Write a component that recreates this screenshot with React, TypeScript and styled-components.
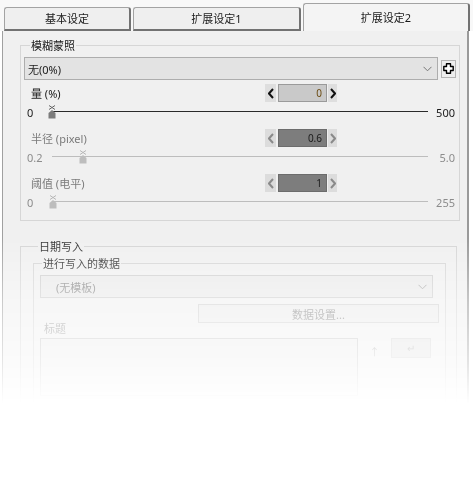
import React from "react";
import styled, { createGlobalStyle } from "styled-components";

const Global = createGlobalStyle`
  html, body { margin: 0; padding: 0; background: #ffffff; }
  body {
    font-family: "Noto Sans", "Noto Sans CJK SC", sans-serif;
    font-size: 11px;
    color: #1a1a1a;
  }
  * { box-sizing: border-box; }
`;

const Root = styled.div`
  width: 473px;
  height: 479px;
  overflow: hidden;
  background: #ffffff;
  -webkit-mask-image: linear-gradient(to bottom, #000 0, #000 238px, rgba(0,0,0,0.55) 302px, rgba(0,0,0,0.27) 362px, transparent 404px);
  mask-image: linear-gradient(to bottom, #000 0, #000 238px, rgba(0,0,0,0.55) 302px, rgba(0,0,0,0.27) 362px, transparent 404px);
`;

const TabBar = styled.div`
  display: flex;
  align-items: flex-end;
  height: 31px;
  padding-left: 4px;
  gap: 2px;
  background: #f8f8f8;
`;

const Tab = styled.div<{ $active?: boolean; $w: number }>`
  width: ${(p) => p.$w}px;
  height: ${(p) => (p.$active ? 28 : 24)}px;
  display: flex;
  align-items: center;
  justify-content: center;
  background: ${(p) => (p.$active ? "#f4f4f4" : "#efefef")};
  border: 1px solid #a3a3a3;
  border-right: 2px solid #727272;
  border-bottom: ${(p) => (p.$active ? "none" : "2px solid #727272")};
  border-radius: 3px 3px 0 0;
  color: #1a1a1a;
  font-size: 11px;
  line-height: 12px;
  padding-top: ${(p) => (p.$active ? 0 : 1)}px;
`;

const Panel = styled.div`
  margin-left: 2px;
  width: 467px;
  height: 448px;
  background: #f0f0f0;
  border-left: 1px solid #a0a0a0;
  border-right: 2px solid #9a9a9a;
  padding: 8px 0 0 17px;
`;

const Group = styled.fieldset<{ $w: number; $pad: string }>`
  margin: 0;
  width: ${(p) => p.$w}px;
  border: 1px solid #d6d6d6;
  padding: ${(p) => p.$pad};
  min-width: 0;
`;

const Legend = styled.legend<{ $ml: number; $c?: string }>`
  margin-left: ${(p) => p.$ml}px;
  padding: 0 1px;
  font-size: 11px;
  line-height: 13px;
  color: ${(p) => p.$c || "#1a1a1a"};
`;

const ComboRow = styled.div`
  display: flex;
  align-items: center;
  gap: 3px;
  margin-top: 5px;
`;

const Combo = styled.div<{ $w: number; $disabled?: boolean }>`
  width: ${(p) => p.$w}px;
  height: 23px;
  display: flex;
  align-items: center;
  justify-content: space-between;
  padding: 0 5px 0 3px;
  background: ${(p) => (p.$disabled ? "#eaeaea" : "#e3e3e3")};
  border: 1px solid ${(p) => (p.$disabled ? "#cfcfcf" : "#adadad")};
  color: ${(p) => (p.$disabled ? "#8a8a8a" : "#1a1a1a")};
  font-size: 11px;
`;

const ComboText = styled.span<{ $pl?: number }>`
  padding-left: ${(p) => p.$pl || 0}px;
`;

const IconBtn = styled.div`
  width: 15px;
  height: 18px;
  display: flex;
  align-items: center;
  justify-content: center;
  background: #eeeeee;
  border: 1px solid #b4b4b4;
`;

const Param = styled.div`
  display: flex;
  flex-direction: column;
  margin-top: 4px;
  & + & { margin-top: 7px; }
`;

const LabelRow = styled.div`
  display: flex;
  align-items: center;
  height: 18px;
`;

const ParamLabel = styled.div<{ $disabled?: boolean }>`
  width: 241px;
  padding-left: 7px;
  color: ${(p) => (p.$disabled ? "#7a7a7a" : "#1a1a1a")};
  font-size: 11px;
`;

const Spinner = styled.div`
  display: flex;
  align-items: center;
  height: 18px;
`;

const SpinArrow = styled.div<{ $w: number; $disabled?: boolean }>`
  width: ${(p) => p.$w}px;
  height: 18px;
  display: flex;
  align-items: center;
  justify-content: center;
  background: ${(p) => (p.$disabled ? "#dcdcdc" : "#dedede")};
`;

const SpinInput = styled.div<{ $disabled?: boolean }>`
  width: 49px;
  height: 18px;
  margin: 0 1px 0 2px;
  display: flex;
  align-items: center;
  justify-content: flex-end;
  padding-right: 4px;
  background: ${(p) => (p.$disabled ? "#7d7d7d" : "#c9c9c9")};
  border: 1px solid ${(p) => (p.$disabled ? "#6c6c6c" : "#9a9a9a")};
  color: ${(p) => (p.$disabled ? "#1a1a1a" : "#6a4a10")};
  font-size: 10px;
`;

const SliderRow = styled.div`
  display: flex;
  align-items: center;
  height: 20px;
`;

const MinLabel = styled.div<{ $disabled?: boolean }>`
  width: 28px;
  padding-left: 3px;
  font-size: 11px;
  color: ${(p) => (p.$disabled ? "#8c8c8c" : "#1a1a1a")};
`;

const MaxLabel = styled.div<{ $disabled?: boolean }>`
  width: 27px;
  text-align: right;
  font-size: 11px;
  color: ${(p) => (p.$disabled ? "#8c8c8c" : "#1a1a1a")};
`;

const Track = styled.div<{ $disabled?: boolean }>`
  position: relative;
  width: 376px;
  height: 20px;
  &::before {
    content: "";
    position: absolute;
    left: 0;
    right: 0;
    top: 9px;
    height: 1px;
    background: ${(p) => (p.$disabled ? "#bdbdbd" : "#2a2a2a")};
  }
`;

const Thumb = styled.svg`
  position: absolute;
  top: 3px;
  transform: translateX(-50%);
`;

const SubGroupWrap = styled.div`
  margin-top: 19px;
`;

const WideBtn = styled.div`
  width: 241px;
  height: 19px;
  margin: 5px 0 0 158px;
  display: flex;
  align-items: center;
  justify-content: center;
  background: #ebebeb;
  border: 1px solid #d0d0d0;
  color: #8a8a8a;
  font-size: 11px;
`;

const SmallLabel = styled.div`
  padding-left: 4px;
  height: 14px;
  line-height: 12px;
  color: #9a9a9a;
  font-size: 11px;
`;

const BottomRow = styled.div`
  display: flex;
  align-items: flex-start;
  margin-top: 1px;
`;

const TextArea = styled.div`
  width: 318px;
  height: 58px;
  background: #ececec;
  border: 1px solid #c4c4c4;
`;

const SideIcon = styled.div`
  width: 33px;
  display: flex;
  justify-content: center;
  padding-top: 6px;
  color: #b0b0b0;
  font-size: 10px;
`;

const SideBtn = styled.div`
  width: 40px;
  height: 20px;
  background: #e2e2e2;
  border: 1px solid #d2d2d2;
  display: flex;
  align-items: center;
  justify-content: center;
  color: #aaa;
  font-size: 10px;
`;

const Chevron = ({ color = "#777" }: { color?: string }) => (
  <svg width="9" height="6" viewBox="0 0 9 6">
    <polyline points="0.5,0.8 4.5,4.8 8.5,0.8" fill="none" stroke={color} strokeWidth="1" />
  </svg>
);

const Arrow = ({ dir, color }: { dir: "l" | "r"; color: string }) => (
  <svg width="6" height="11" viewBox="0 0 6 11">
    <polyline
      points={dir === "l" ? "5,1 1,5.5 5,10" : "1,1 5,5.5 1,10"}
      fill="none"
      stroke={color}
      strokeWidth="2"
    />
  </svg>
);

const ThumbIcon = ({ frac, disabled }: { frac: number; disabled?: boolean }) => (
  <Thumb width="9" height="14" viewBox="0 0 9 14" style={{ left: `${frac * 100}%` }}>
    <line x1="1.5" y1="0.5" x2="7.5" y2="4.5" stroke={disabled ? "#b8b8b8" : "#666"} strokeWidth="1" />
    <line x1="7.5" y1="0.5" x2="1.5" y2="4.5" stroke={disabled ? "#b8b8b8" : "#666"} strokeWidth="1" />
    <polygon points="4.5,5 8,8 8,13.5 1,13.5 1,8" fill={disabled ? "#bdbdbd" : "#7c7c7c"} />
  </Thumb>
);

const PlusIcon = () => (
  <svg width="11" height="11" viewBox="0 0 11 11">
    <polygon
      points="3.5,0.8 7.5,0.8 7.5,3.5 10.2,3.5 10.2,7.5 7.5,7.5 7.5,10.2 3.5,10.2 3.5,7.5 0.8,7.5 0.8,3.5 3.5,3.5"
      fill="#fff"
      stroke="#000"
      strokeWidth="1.4"
      strokeLinejoin="round"
    />
  </svg>
);

type P = { label: string; value: string; min: string; max: string; frac: number; disabled?: boolean };

const params: P[] = [
  { label: "量 (%)", value: "0", min: "0", max: "500", frac: 0 },
  { label: "半径 (pixel)", value: "0.6", min: "0.2", max: "5.0", frac: 0.4 / 4.8, disabled: true },
  { label: "阈值 (电平)", value: "1", min: "0", max: "255", frac: 1 / 255, disabled: true },
];

export default function App() {
  return (
    <Root>
      <Global />
      <TabBar>
        <Tab $w={127}>基本设定</Tab>
        <Tab $w={168}>扩展设定1</Tab>
        <Tab $w={167} $active>扩展设定2</Tab>
      </TabBar>
      <Panel>
        <Group $w={440} $pad="0 3px 8px 3px">
          <Legend $ml={6}>模糊蒙照</Legend>
          <ComboRow>
            <Combo $w={414}>
              <ComboText>无(0%)</ComboText>
              <Chevron />
            </Combo>
            <IconBtn>
              <PlusIcon />
            </IconBtn>
          </ComboRow>
          {params.map((p) => (
            <Param key={p.label}>
              <LabelRow>
                <ParamLabel $disabled={p.disabled}>{p.label}</ParamLabel>
                <Spinner>
                  <SpinArrow $w={11} $disabled={p.disabled}>
                    <Arrow dir="l" color={p.disabled ? "#8a8a8a" : "#111"} />
                  </SpinArrow>
                  <SpinInput $disabled={p.disabled}>{p.value}</SpinInput>
                  <SpinArrow $w={9} $disabled={p.disabled}>
                    <Arrow dir="r" color={p.disabled ? "#8a8a8a" : "#111"} />
                  </SpinArrow>
                </Spinner>
              </LabelRow>
              <SliderRow>
                <MinLabel $disabled={p.disabled}>{p.min}</MinLabel>
                <Track $disabled={p.disabled}>
                  <ThumbIcon frac={p.frac} disabled={p.disabled} />
                </Track>
                <MaxLabel $disabled={p.disabled}>{p.max}</MaxLabel>
              </SliderRow>
            </Param>
          ))}
        </Group>

        <SubGroupWrap>
          <Group $w={437} $pad="0 9px 20px 12px">
            <Legend $ml={5} $c="#333">日期写入</Legend>
            <Group $w={413} $pad="0 6px 10px 6px" style={{ marginTop: 4 }}>
              <Legend $ml={2} $c="#333">进行写入的数据</Legend>
              <Combo $w={393} $disabled style={{ marginTop: 5 }}>
                <ComboText $pl={12}>(无模板)</ComboText>
                <Chevron color="#a8a8a8" />
              </Combo>
              <WideBtn style={{ marginTop: 6 }}>数据设置...</WideBtn>
              <SmallLabel>标题</SmallLabel>
              <BottomRow>
                <TextArea />
                <SideIcon>↑</SideIcon>
                <SideBtn>↵</SideBtn>
              </BottomRow>
            </Group>
          </Group>
        </SubGroupWrap>
      </Panel>
    </Root>
  );
}
